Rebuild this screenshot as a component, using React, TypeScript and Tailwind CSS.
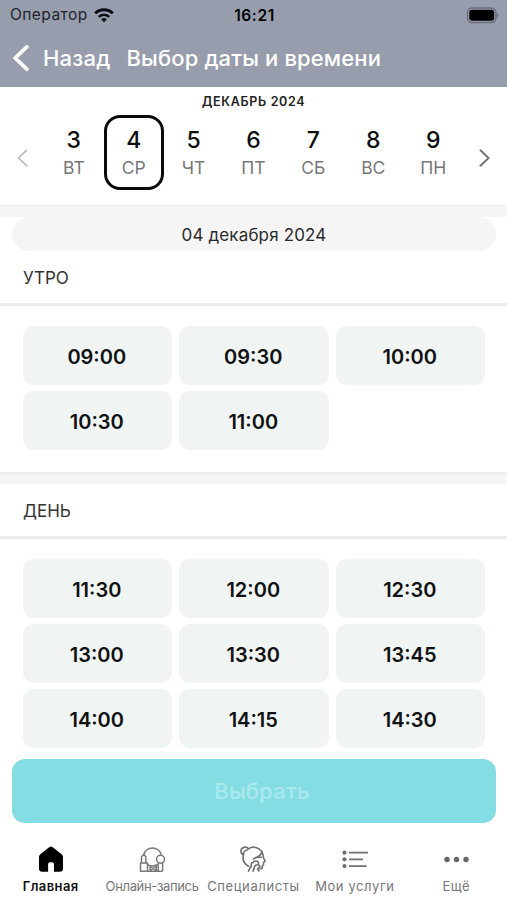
import clsx from "clsx"

const days = [
  { day: 3, name: "ВТ" },
  { day: 4, name: "СР", selected: true },
  { day: 5, name: "ЧТ" },
  { day: 6, name: "ПТ" },
  { day: 7, name: "СБ" },
  { day: 8, name: "ВС" },
  { day: 9, name: "ПН" },
]

const morning = ["09:00", "09:30", "10:00", "10:30", "11:00"]
const afternoon = [
  "11:30",
  "12:00",
  "12:30",
  "13:00",
  "13:30",
  "13:45",
  "14:00",
  "14:15",
  "14:30",
]

interface ChevronProps {
  className: string
  direction: "left" | "right"
  strokeWidth: number
}

function Chevron({ className, direction, strokeWidth }: ChevronProps) {
  return (
    <svg
      viewBox="0 0 12 20"
      className={className}
      fill="none"
      stroke="currentColor"
      strokeWidth={strokeWidth}
      strokeLinecap="round"
      strokeLinejoin="round"
    >
      <path d={direction === "left" ? "M10.5 1.5 1.5 10l9 8.5" : "M1.5 1.5l9 8.5-9 8.5"} />
    </svg>
  )
}

function StatusBar() {
  return (
    <div className="grid h-[30px] grid-cols-3 items-center pl-[10px] pr-[8px] text-black">
      <div className="flex items-center gap-[6px]">
        <span className="text-[15.5px] leading-none tracking-[0.45px] text-[#20232b]">
          Оператор
        </span>
        <svg viewBox="0 0 20 15" className="h-[15px] w-5" fill="none" stroke="#0c0d12">
          <path d="M1.2 5.3a12.6 12.6 0 0 1 17.6 0" strokeWidth="3" />
          <path d="M4.7 8.9a7.6 7.6 0 0 1 10.6 0" strokeWidth="2.7" />
          <path d="M10 14.3 7.2 11.4a4 4 0 0 1 5.6 0Z" fill="#0c0d12" stroke="none" />
        </svg>
      </div>
      <span className="pt-px text-center text-[15.5px] font-semibold leading-none tracking-[0.6px]">
        16:21
      </span>
      <div className="flex justify-end">
        <svg viewBox="0 0 34 17" className="h-[17px] w-[34px]">
          <rect x="2.5" y="1" width="28.5" height="14.5" rx="4.5" fill="none" stroke="#6b6f7c" strokeWidth="1.4" />
          <rect x="4.3" y="2.8" width="24.9" height="10.9" rx="2.4" fill="#000" />
          <path d="M32 5.8c1.9.9 1.9 4 0 4.9Z" fill="#6b6f7c" />
        </svg>
      </div>
    </div>
  )
}

function Header() {
  return (
    <header className="h-[87px] shrink-0 bg-[#989dae]">
      <StatusBar />
      <div className="flex h-14 items-center pl-[13px] text-[22px] font-medium leading-none text-white">
        <Chevron direction="left" strokeWidth={2.9} className="h-[26px] w-4" />
        <span className="ml-[14px] tracking-[0.2px]">Назад</span>
        <span className="ml-4 tracking-[0.13px]">Выбор даты и времени</span>
      </div>
    </header>
  )
}

function Calendar() {
  return (
    <div className="h-[118px] shrink-0 bg-white">
      <div className="pt-[6px] text-center text-[12.5px] font-semibold leading-[18px] tracking-[0.65px] text-[#222]">
        ДЕКАБРЬ 2024
      </div>
      <div className="mt-1 flex items-center justify-between px-[17px]">
        <Chevron direction="left" strokeWidth={1.9} className="mt-[10px] h-[18px] w-[11px] text-[#bbb]" />
        <div className="flex">
          {days.map(({ day, name, selected }) => (
            <div
              key={day}
              className={clsx(
                "flex h-[75px] w-[59.9px] flex-col items-center rounded-[16px] border-[3px] pt-[8px]",
                selected ? "border-[#0b0b0b]" : "border-transparent",
              )}
            >
              <span className="text-[23px] font-medium leading-[28px] text-[#0e0e0e]">{day}</span>
              <span className="text-[17.5px] leading-[28px] text-[#777]">{name}</span>
            </div>
          ))}
        </div>
        <Chevron direction="right" strokeWidth={2.3} className="mt-[10px] h-[18px] w-[11px] text-[#777]" />
      </div>
    </div>
  )
}

interface SlotSectionProps {
  title: string
  slots: string[]
  className?: string
}

function SlotSection({ title, slots, className }: SlotSectionProps) {
  return (
    <section className={className}>
      <h2 className="flex h-[55px] items-center border-b-[3px] border-[#ededee] pl-[23px] pt-[3px] text-[17px] leading-none text-[#333]">
        {title}
      </h2>
      <div className="grid grid-cols-3 gap-x-[7px] gap-y-[6px] pl-[22.5px] pr-[22px] pt-5">
        {slots.map((slot) => (
          <button
            key={slot}
            className="h-[59px] rounded-[11px] bg-[#f0f4f3] pr-px pt-[3px] text-[20px] font-semibold text-[#101112]"
          >
            {slot}
          </button>
        ))}
      </div>
    </section>
  )
}

function HomeIcon() {
  return (
    <svg viewBox="0 0 26 26" className="size-[26px]" fill="#000">
      <path d="M11.5 1.1a2.5 2.5 0 0 1 3 0l9.1 7.1a3.4 3.4 0 0 1 1.4 2.7v11.6a3.3 3.3 0 0 1-3.3 3.3H16v-7.6a2 2 0 0 0-2-2h-1.900a2 2 0 0 0-2 2v7.600H4.300A3.300 3.300 0 0 1 1 22.500V10.900a3.400 3.400 0 0 1 1.400-2.700Z" />
    </svg>
  )
}

// Round mirror with cosmetics standing around it
function BookingIcon() {
  return (
    <svg
      viewBox="0 0 26 26"
      className="size-[26px]"
      fill="none"
      stroke="#777"
      strokeWidth="1.5"
      strokeLinejoin="round"
    >
      <path d="M4.8 8.6A9 9 0 0 1 22.200 8.600M8.300 18.300a9.500 9.500 0 0 0 10.200.2" />
      <circle cx="21.500" cy="13.300" r="4" />
      <path d="M2.500 17v-6.500L4.800 8.600l2 1.900V17M1.500 17h7v8.200h-7ZM8.500 25.200H20M11.200 20.500l3 2 3-2v4l-3-2-3 2ZM19.200 17.200v6.300a2.200 2.200 0 0 0 4.400 0v-6.300" />
    </svg>
  )
}

// Face in profile with a hair bun
function SpecialistsIcon() {
  return (
    <svg
      viewBox="0 0 26 26"
      className="size-[26px]"
      fill="none"
      stroke="#6f6f6f"
      strokeWidth="1.6"
      strokeLinecap="round"
      strokeLinejoin="round"
    >
      <path d="M8.300 2.800C6.500 0 1 1 1 5.200c0 1.600.9 3 2.500 3.500M3.500 8.700C3.300 6.300 5 4.300 7.300 4" />
      <path d="M8.300 2.800c5.500-3.500 13.200-1 14.800 6.200l.3 2.500 1.800 3.500-1.700 1.500v2.300l-1.300 1.200.2 2-2.300 1" />
      <path d="M3.500 8.700c-1.200 4.500.7 9 5 11.500M10.500 21 8.500 25.200M14 22.500l-1 2.700" />
      <path d="M22 6c-1.500 4.800-5.500 5-8.500 7M18 11.500l3.300-.2" />
      <path d="M11.500 20.500c-.7-2.500 0-4.300 1.700-4 .5-2 4.800-2.200 5.300.8M14 22.500c.3-2.500 2-4 4.500-3.700l1.500 1.700-2.500 2.700 1.500 1.800" />
    </svg>
  )
}

function ServicesIcon() {
  return (
    <svg viewBox="0 0 26 26" className="size-[26px]" stroke="#707070" strokeWidth="1.7">
      <path d="M7 6.700h19M7 13.300h14M7 20.100h17.500" />
      <g fill="#707070" stroke="none">
        <circle cx="2.500" cy="6.700" r="2.100" />
        <circle cx="2.500" cy="13.300" r="2.100" />
        <circle cx="2.500" cy="20.100" r="2.100" />
      </g>
    </svg>
  )
}

function MoreIcon() {
  return (
    <svg viewBox="0 0 26 26" className="size-[26px]" fill="#666">
      <circle cx="4" cy="13.500" r="2.700" />
      <circle cx="13.500" cy="13.500" r="2.700" />
      <circle cx="23" cy="13.500" r="2.700" />
    </svg>
  )
}

const tabs = [
  { label: "Главная", icon: HomeIcon, text: "font-semibold tracking-[0.4px] text-[#111]" },
  { label: "Онлайн-запись", icon: BookingIcon, text: "tracking-[-0.35px] text-[#777]" },
  { label: "Специалисты", icon: SpecialistsIcon, text: "tracking-[0.6px] text-[#777]" },
  { label: "Мои услуги", icon: ServicesIcon, text: "tracking-[0.6px] text-[#777]" },
  { label: "Ещё", icon: MoreIcon, text: "tracking-[0.4px] text-[#777]" },
]

function TabBar() {
  return (
    <nav className="grid h-[77px] shrink-0 grid-cols-5 bg-white pt-[23px]">
      {tabs.map(({ label, icon: Icon, text }) => (
        <div key={label} className="flex flex-col items-center">
          <Icon />
          <span className={clsx("mt-[6px] whitespace-nowrap text-[13px] leading-4", text)}>
            {label}
          </span>
        </div>
      ))}
    </nav>
  )
}

export default function App() {
  return (
    <div className="flex h-[900px] w-[507px] flex-col overflow-hidden bg-white font-['Inter','Liberation_Sans',sans-serif]">
      <Header />
      <Calendar />
      <main className="flex h-[618px] shrink-0 flex-col">
        <div className="h-3 shrink-0 border-t border-[#efefef] bg-[#f5f5f5]" />
        <div className="ml-3 mr-[11px] flex h-[34px] shrink-0 items-center justify-center rounded-full bg-[#f5f5f5] pt-[3px] text-[17px] tracking-[0.15px] text-[#2b2b2b]">
          04 декабря 2024
        </div>
        <SlotSection title="УТРО" slots={morning} className="h-[221px] shrink-0" />
        <div className="h-3 shrink-0 border-t-2 border-[#eee] bg-[#f5f5f5]" />
        <SlotSection title="ДЕНЬ" slots={afternoon} className="h-[275px] shrink-0" />
        <button className="ml-3 mr-[11px] h-16 shrink-0 rounded-[13px] bg-[#84dde2] pl-4 text-[22px] font-medium tracking-[0.2px] text-[#a9e9ed]">
          Выбрать
        </button>
      </main>
      <TabBar />
    </div>
  )
}
